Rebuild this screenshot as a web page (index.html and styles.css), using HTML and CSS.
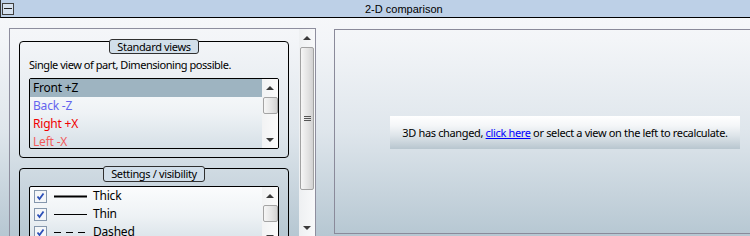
FILE: index.html
```html
<!DOCTYPE html>
<html>
<head>
<meta charset="utf-8">
<link rel="stylesheet" href="styles.css">
</head>
<body>
<div class="titlebar">
  <span class="collapse"><span class="minus"></span></span>
  <span class="title">2-D comparison</span>
</div>
<div class="main">
  <div class="leftpanel">
    <div class="leftcontent">
      <div class="group">
        <div class="legend">Standard views</div>
        <div class="desc">Single view of part, Dimensioning possible.</div>
        <div class="listbox lb1">
          <div class="rows">
            <div class="row sel">Front +Z</div>
            <div class="row c-back">Back -Z</div>
            <div class="row c-right">Right +X</div>
            <div class="row c-left">Left -X</div>
          </div>
          <div class="sbar">
            <div class="sbtn"><span class="arr-up"></span></div>
            <div class="sthumb"></div>
            <div class="sspace"></div>
            <div class="sbtn"><span class="arr-down"></span></div>
          </div>
        </div>
      </div>
      <div class="group g2">
        <div class="legend">Settings / visibility</div>
        <div class="listbox lb2">
          <div class="rows">
            <div class="row chk">
              <svg class="cb" width="13" height="13" viewBox="0 0 13 13"><rect x="0.5" y="0.5" width="12" height="12" fill="#f4f6f8" stroke="#8597ad"/><path d="M3.5 6.5 L5.5 9 L9.5 3.5" fill="none" stroke="#2b4fb8" stroke-width="1.8"/></svg>
              <svg class="ln" width="33" height="5" viewBox="0 0 33 5"><line x1="0" y1="2.5" x2="33" y2="2.5" stroke="#000" stroke-width="2"/></svg>
              <span>Thick</span>
            </div>
            <div class="row chk">
              <svg class="cb" width="13" height="13" viewBox="0 0 13 13"><rect x="0.5" y="0.5" width="12" height="12" fill="#f4f6f8" stroke="#8597ad"/><path d="M3.5 6.5 L5.5 9 L9.5 3.5" fill="none" stroke="#2b4fb8" stroke-width="1.8"/></svg>
              <svg class="ln" width="33" height="5" viewBox="0 0 33 5"><line x1="0" y1="2.5" x2="33" y2="2.5" stroke="#000" stroke-width="1"/></svg>
              <span>Thin</span>
            </div>
            <div class="row chk">
              <svg class="cb" width="13" height="13" viewBox="0 0 13 13"><rect x="0.5" y="0.5" width="12" height="12" fill="#f4f6f8" stroke="#8597ad"/><path d="M3.5 6.5 L5.5 9 L9.5 3.5" fill="none" stroke="#2b4fb8" stroke-width="1.8"/></svg>
              <svg class="ln" width="33" height="5" viewBox="0 0 33 5"><line x1="0" y1="2.5" x2="33" y2="2.5" stroke="#000" stroke-width="1" stroke-dasharray="7 5"/></svg>
              <span>Dashed</span>
            </div>
          </div>
          <div class="sbar">
            <div class="sbtn"><span class="arr-up"></span></div>
            <div class="sthumb"></div>
            <div class="sspace"></div>
            <div class="sbtn"><span class="arr-down"></span></div>
          </div>
        </div>
      </div>
    </div>
    <div class="bigbar">
      <div class="bbtn"><span class="arr-up"></span></div>
      <div class="bthumb"><span class="grip"></span></div>
      <div class="sspace"></div>
      <div class="bbtn"><span class="arr-down"></span></div>
    </div>
  </div>
  <div class="rightpanel">
    <div class="msg">3D has changed, <a href="#" class="link">click here</a> or select a view on the left to recalculate.</div>
  </div>
</div>
</body>
</html>
```
FILE: styles.css
```css
* { box-sizing: border-box; }
html, body { margin: 0; padding: 0; }
body {
  width: 750px;
  height: 236px;
  overflow: hidden;
  font-family: "Noto Sans", "Open Sans", sans-serif;
  font-size: 11px;
  letter-spacing: -0.35px;
  color: #000;
  background: linear-gradient(to bottom, #f8f9fb 0px, #f3f5f8 40px, #dfe6ec 130px, #b6c7d2 236px);
}
.titlebar {
  height: 18px;
  border-bottom: 1px solid #000;
  border-left: 1px solid #333;
  background: #bdd0e7;
  display: flex;
  align-items: center;
}
.collapse {
  width: 12px;
  height: 12px;
  margin-left: 1px;
  border: 1px solid #404040;
  background: #d6e1ee;
  display: flex;
  align-items: center;
  justify-content: center;
}
.minus { width: 8px; height: 1px; background: #202020; }
.title {
  margin-left: 351px;
  font-family: "Liberation Sans", Arial, sans-serif;
  font-size: 11px;
  letter-spacing: 0;
  line-height: 14px;
}
.main {
  display: flex;
  gap: 18px;
  padding: 10px 0 0 9px;
  height: 218px;
  overflow: hidden;
  align-items: flex-start;
}
.leftpanel {
  flex: none;
  width: 307px;
  height: 209px;
  border: 1px solid #8e8e9e;
  display: flex;
}
.leftcontent {
  flex: 1;
  padding: 12px 0 0 9px;
}
.group {
  width: 270px;
  border: 1px solid #000;
  border-radius: 4px;
  padding: 0 9px 8px;
  display: flex;
  flex-direction: column;
}
.g2 { margin-top: 10px; }
.legend {
  align-self: center;
  margin-top: -3px;
  height: 15px;
  padding: 0 7px;
  line-height: 13px;
  border: 1px solid #303030;
  border-radius: 3px;
  background: #d2dfea;
  white-space: nowrap;
}
.g2 .legend { height: 16px; line-height: 14px; }
.desc {
  margin: 3px 0 5px;
  line-height: 16px;
  letter-spacing: -0.45px;
  white-space: nowrap;
}
.listbox {
  border: 1px solid #000;
  border-radius: 2px;
  display: flex;
  overflow: hidden;
  background: linear-gradient(to bottom, #fbfcfd 0%, #eef2f5 50%, #d6e0e7 100%);
}
.lb1 { height: 71px; }
.g2 .listbox { margin-top: 4px; height: 60px; }
.rows { flex: 1; }
.row {
  height: 18px;
  line-height: 18px;
  padding-left: 3px;
  font-size: 12px;
  letter-spacing: -0.2px;
  white-space: nowrap;
}
.sel { background: #9eb4c1; }
.c-back { color: #6464ee; }
.c-right { color: #f00000; }
.c-left { color: #f25c5c; }
.chk {
  display: flex;
  align-items: center;
  padding-left: 4px;
}
.cb { flex: none; }
.ln { flex: none; margin-left: 7px; }
.chk span { margin-left: 6px; line-height: 16px; }
.sbar {
  flex: none;
  width: 16px;
  background: linear-gradient(to right, #f2f3f4, #fafafa);
  display: flex;
  flex-direction: column;
}
.sbtn {
  height: 17px;
  display: flex;
  align-items: center;
  justify-content: center;
}
.sthumb {
  margin: 1px 0 0 1px;
  width: 15px;
  height: 17px;
  border: 1px solid #a4a4a4;
  border-radius: 2px;
  background: linear-gradient(to right, #f6f6f6, #e4e4e4 60%, #d4d4d4);
}
.sspace { flex: 1; }
.arr-up, .arr-down {
  width: 0;
  height: 0;
  border-left: 4px solid transparent;
  border-right: 4px solid transparent;
}
.arr-up { border-bottom: 4px solid #3a3a3a; }
.arr-down { border-top: 4px solid #3a3a3a; }
.bigbar {
  flex: none;
  width: 16px;
  background: linear-gradient(to right, #eef0f2, #f8f9fa);
  display: flex;
  flex-direction: column;
}
.bbtn {
  height: 17px;
  display: flex;
  align-items: center;
  justify-content: center;
}
.bthumb {
  margin: 1px 0 0 1px;
  width: 14px;
  height: 143px;
  border: 1px solid #a2a2a2;
  border-radius: 2px;
  background: linear-gradient(to right, #f6f6f6, #e2e2e2 60%, #d2d2d2);
  display: flex;
  align-items: center;
  justify-content: center;
}
.grip {
  width: 7px;
  height: 5px;
  border-top: 1px solid #555;
  border-bottom: 1px solid #555;
  background: linear-gradient(to bottom, transparent 1px, #555 1px, #555 2px, transparent 2px);
}
.rightpanel {
  flex: none;
  width: 430px;
  height: 205px;
  margin-top: 1px;
  border: 1px solid #8a8a9a;
  padding: 86px 0 0 55px;
}
.msg {
  width: 350px;
  height: 33px;
  line-height: 33px;
  text-align: center;
  white-space: nowrap;
  background: linear-gradient(to bottom, #ffffff 0%, #f4f6f8 30%, #dde4e9 60%, #b8c6cf 100%);
}
.link { color: #0000ff; text-decoration: underline; }
```
